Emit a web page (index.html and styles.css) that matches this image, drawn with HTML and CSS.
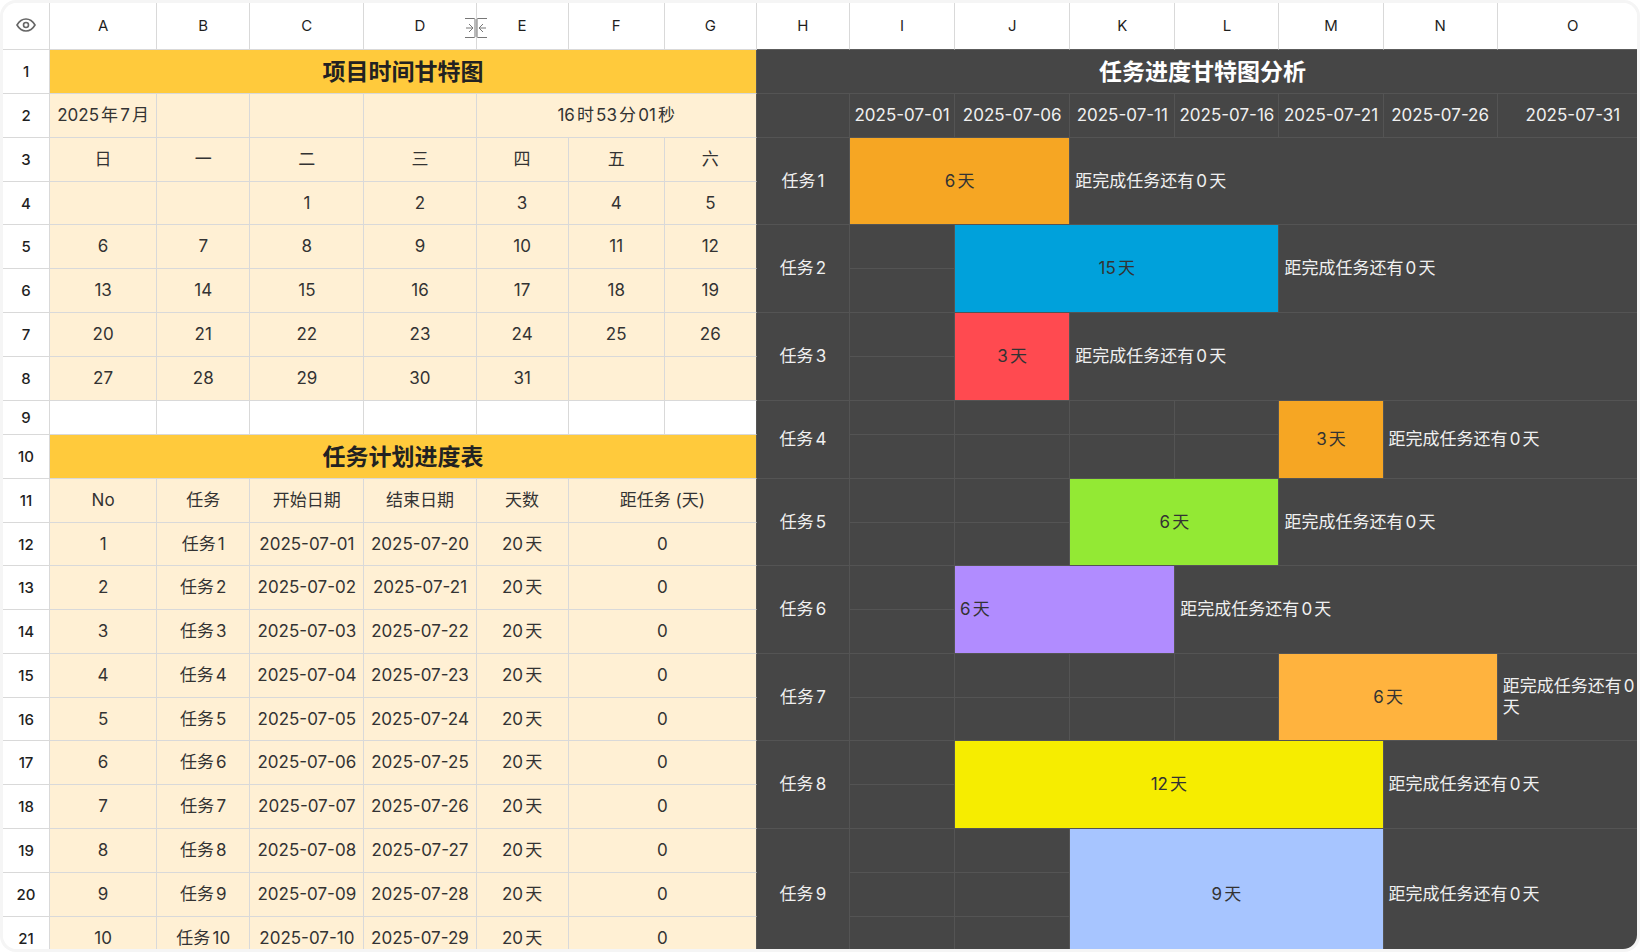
FILE: index.html
```html
<!DOCTYPE html>
<html lang="zh-CN">
<head>
<meta charset="utf-8">
<title>项目时间甘特图</title>
<link rel="stylesheet" href="styles.css">
</head>
<body>
<main class="frame">
<div class="sheet">
<table class="grid">
<colgroup>
<col class="w-index"><col class="w-a"><col class="w-b"><col class="w-l"><col class="w-d"><col class="w-s"><col class="w-f"><col class="w-s">
<col class="w-b"><col class="w-i"><col class="w-j"><col class="w-i"><col class="w-m"><col class="w-m"><col class="w-l"><col class="w-o">
</colgroup>
<thead>
<tr>
<th><svg class="eye" viewBox="0 0 20 14" aria-label="显示"><path d="M1 7C3.200 3.200 6.400 1 10 1s6.800 2.200 9 6c-2.200 3.800-5.400 6-9 6S3.200 10.800 1 7z"/><circle cx="10" cy="7" r="2.500"/></svg></th>
<th>A</th><th>B</th><th>C</th>
<th class="resizable">D<svg class="resize" viewBox="0 0 22 20" aria-hidden="true"><path d="M0 .5h9q1 0 1 1v17q0 1-1 1H0M22 .5h-9q-1 0-1 1v17q0 1 1 1h9M1 10h7M4 6l4 4-4 4M21 10h-7M18 6l-4 4 4 4"/></svg></th>
<th>E</th><th>F</th><th>G</th>
<th class="over-dark">H</th><th class="over-dark">I</th><th class="over-dark">J</th><th class="over-dark">K</th><th class="over-dark">L</th><th class="over-dark">M</th><th class="over-dark">N</th><th class="over-dark">O</th>
</tr>
</thead>
<tbody>
<tr><th>1</th><td class="title edge" colspan="7">项目时间甘特图</td><td class="dark title" colspan="8">任务进度甘特图分析</td></tr>
<tr><th>2</th><td>2025年7月</td><td></td><td></td><td></td><td class="edge" colspan="3">16时53分01秒</td><td class="dark"></td><td class="dark">2025-07-01</td><td class="dark">2025-07-06</td><td class="dark">2025-07-11</td><td class="dark">2025-07-16</td><td class="dark">2025-07-21</td><td class="dark">2025-07-26</td><td class="dark">2025-07-31</td></tr>
<tr><th>3</th><td>日</td><td>一</td><td>二</td><td>三</td><td>四</td><td>五</td><td class="edge">六</td>
<td class="dark" rowspan="2">任务1</td><td class="dark bar amber" colspan="2" rowspan="2">6天</td><td class="dark note" colspan="5" rowspan="2">距完成任务还有0天</td></tr>
<tr class="short"><th>4</th><td></td><td></td><td>1</td><td>2</td><td>3</td><td>4</td><td class="edge">5</td></tr>
<tr><th>5</th><td>6</td><td>7</td><td>8</td><td>9</td><td>10</td><td>11</td><td class="edge">12</td>
<td class="dark" rowspan="2">任务2</td><td class="dark"></td><td class="dark bar blue" colspan="3" rowspan="2">15天</td><td class="dark note" colspan="3" rowspan="2">距完成任务还有0天</td></tr>
<tr><th>6</th><td>13</td><td>14</td><td>15</td><td>16</td><td>17</td><td>18</td><td class="edge">19</td><td class="dark"></td></tr>
<tr><th>7</th><td>20</td><td>21</td><td>22</td><td>23</td><td>24</td><td>25</td><td class="edge">26</td>
<td class="dark" rowspan="2">任务3</td><td class="dark"></td><td class="dark bar red" rowspan="2">3天</td><td class="dark note" colspan="5" rowspan="2">距完成任务还有0天</td></tr>
<tr><th>8</th><td>27</td><td>28</td><td>29</td><td>30</td><td>31</td><td></td><td class="edge"></td><td class="dark"></td></tr>
<tr class="blank"><th>9</th><td></td><td></td><td></td><td></td><td></td><td></td><td class="edge"></td>
<td class="dark" rowspan="2">任务4</td><td class="dark"></td><td class="dark"></td><td class="dark"></td><td class="dark"></td><td class="dark bar amber" rowspan="2">3天</td><td class="dark note" colspan="2" rowspan="2">距完成任务还有0天</td></tr>
<tr><th>10</th><td class="title edge" colspan="7">任务计划进度表</td><td class="dark"></td><td class="dark"></td><td class="dark"></td><td class="dark"></td></tr>
<tr><th>11</th><td>No</td><td>任务</td><td>开始日期</td><td>结束日期</td><td>天数</td><td class="edge" colspan="2">距任务 (天)</td>
<td class="dark" rowspan="2">任务5</td><td class="dark"></td><td class="dark"></td><td class="dark bar green" colspan="2" rowspan="2">6天</td><td class="dark note" colspan="3" rowspan="2">距完成任务还有0天</td></tr>
<tr class="short"><th>12</th><td>1</td><td>任务1</td><td>2025-07-01</td><td>2025-07-20</td><td>20天</td><td class="edge" colspan="2">0</td><td class="dark"></td><td class="dark"></td></tr>
<tr><th>13</th><td>2</td><td>任务2</td><td>2025-07-02</td><td>2025-07-21</td><td>20天</td><td class="edge" colspan="2">0</td>
<td class="dark" rowspan="2">任务6</td><td class="dark"></td><td class="dark bar violet note" colspan="2" rowspan="2">6天</td><td class="dark note" colspan="4" rowspan="2">距完成任务还有0天</td></tr>
<tr><th>14</th><td>3</td><td>任务3</td><td>2025-07-03</td><td>2025-07-22</td><td>20天</td><td class="edge" colspan="2">0</td><td class="dark"></td></tr>
<tr><th>15</th><td>4</td><td>任务4</td><td>2025-07-04</td><td>2025-07-23</td><td>20天</td><td class="edge" colspan="2">0</td>
<td class="dark" rowspan="2">任务7</td><td class="dark"></td><td class="dark"></td><td class="dark"></td><td class="dark"></td><td class="dark bar orange" colspan="2" rowspan="2">6天</td><td class="dark note wrap" rowspan="2">距完成任务还有0天</td></tr>
<tr class="short"><th>16</th><td>5</td><td>任务5</td><td>2025-07-05</td><td>2025-07-24</td><td>20天</td><td class="edge" colspan="2">0</td><td class="dark"></td><td class="dark"></td><td class="dark"></td><td class="dark"></td></tr>
<tr><th>17</th><td>6</td><td>任务6</td><td>2025-07-06</td><td>2025-07-25</td><td>20天</td><td class="edge" colspan="2">0</td>
<td class="dark" rowspan="2">任务8</td><td class="dark"></td><td class="dark bar yellow" colspan="4" rowspan="2">12天</td><td class="dark note" colspan="2" rowspan="2">距完成任务还有0天</td></tr>
<tr><th>18</th><td>7</td><td>任务7</td><td>2025-07-07</td><td>2025-07-26</td><td>20天</td><td class="edge" colspan="2">0</td><td class="dark"></td></tr>
<tr><th>19</th><td>8</td><td>任务8</td><td>2025-07-08</td><td>2025-07-27</td><td>20天</td><td class="edge" colspan="2">0</td>
<td class="dark" rowspan="3">任务9</td><td class="dark"></td><td class="dark"></td><td class="dark bar sky" colspan="3" rowspan="3">9天</td><td class="dark note" colspan="2" rowspan="3">距完成任务还有0天</td></tr>
<tr><th>20</th><td>9</td><td>任务9</td><td>2025-07-09</td><td>2025-07-28</td><td>20天</td><td class="edge" colspan="2">0</td><td class="dark"></td><td class="dark"></td></tr>
<tr><th>21</th><td>10</td><td>任务10</td><td>2025-07-10</td><td>2025-07-29</td><td>20天</td><td class="edge" colspan="2">0</td><td class="dark"></td><td class="dark"></td></tr>
</tbody>
</table>
</div>
</main>
</body>
</html>
```
FILE: styles.css
```css
* {
  box-sizing: border-box;
}

body {
  margin: 0;
  background: #fff;
  color: #333;
  font: 17px/21px Inter, "Noto Sans CJK SC", sans-serif;
  text-autospace: normal;
}

.frame {
  height: 100vh;
  padding: 3px;
  border-radius: 16px;
  background: #f5f5f5;
}

.sheet {
  height: 100%;
  overflow: hidden;
  border-radius: 14px;
  background: #fff;
}

/* The last column runs slightly past the visible edge of the sheet. */
.grid {
  width: calc(100% + 12px);
  table-layout: fixed;
  border-collapse: separate;
  border-spacing: 0;
}

.w-index { width: 47px; }
.w-a { width: 107px; }
.w-b { width: 93px; }
.w-s { width: 92px; }
.w-i { width: 105px; }
.w-m { width: 104px; }
.w-l { width: 114px; }
.w-j { width: 115px; }
.w-d { width: 112px; }
.w-f { width: 96px; }
.w-o { width: 151px; }

th,
td {
  height: 44px;
  padding: 0;
  border: solid #d9d9d9;
  border-width: 0 1px 1px 0;
  text-align: center;
  vertical-align: middle;
  white-space: nowrap;
}

th {
  background: #fff;
  color: #1f1f1f;
  font-size: 15px;
  font-weight: 400;
}

tbody th {
  font-weight: 500;
}

thead th {
  height: 47px;
  padding-bottom: 2px;
}

.over-dark {
  border-bottom-color: #5c5c5c;
}

.short > * {
  height: 43px;
}

.blank > * {
  height: 34px;
}

td {
  background: #fff0d4;
}

.blank td {
  background: #fff;
}

td.title {
  background: #ffca3c;
  color: #222;
  font-size: 23px;
  font-weight: 700;
  line-height: 28px;
}

.edge {
  border-right-color: #555;
}

td.dark {
  border-color: #545454;
  background: #464646;
  color: #f0f0f0;
}

td.dark.title {
  color: #fff;
}

.note {
  padding-left: 5px;
  text-align: left;
}

.wrap {
  white-space: normal;
}

td.bar {
  color: #333;
}

td.amber { background: #f6a623; }
td.blue { background: #00a1db; }
td.red { background: #ff4a50; }
td.green { background: #93e934; }
td.violet { background: #b18cff; }
td.orange { background: #ffb33e; }
td.yellow { background: #f6ed00; }
td.sky { background: #a7c5ff; }

.eye,
.resize {
  fill: none;
  stroke: #777;
}

.eye {
  display: block;
  width: 20px;
  height: 14px;
  margin: 0 auto;
  stroke: #666;
  stroke-width: 1.6;
}

.resizable {
  position: relative;
}

.resize {
  position: absolute;
  top: 15px;
  right: -11px;
  z-index: 1;
  width: 22px;
  height: 20px;
}
```
